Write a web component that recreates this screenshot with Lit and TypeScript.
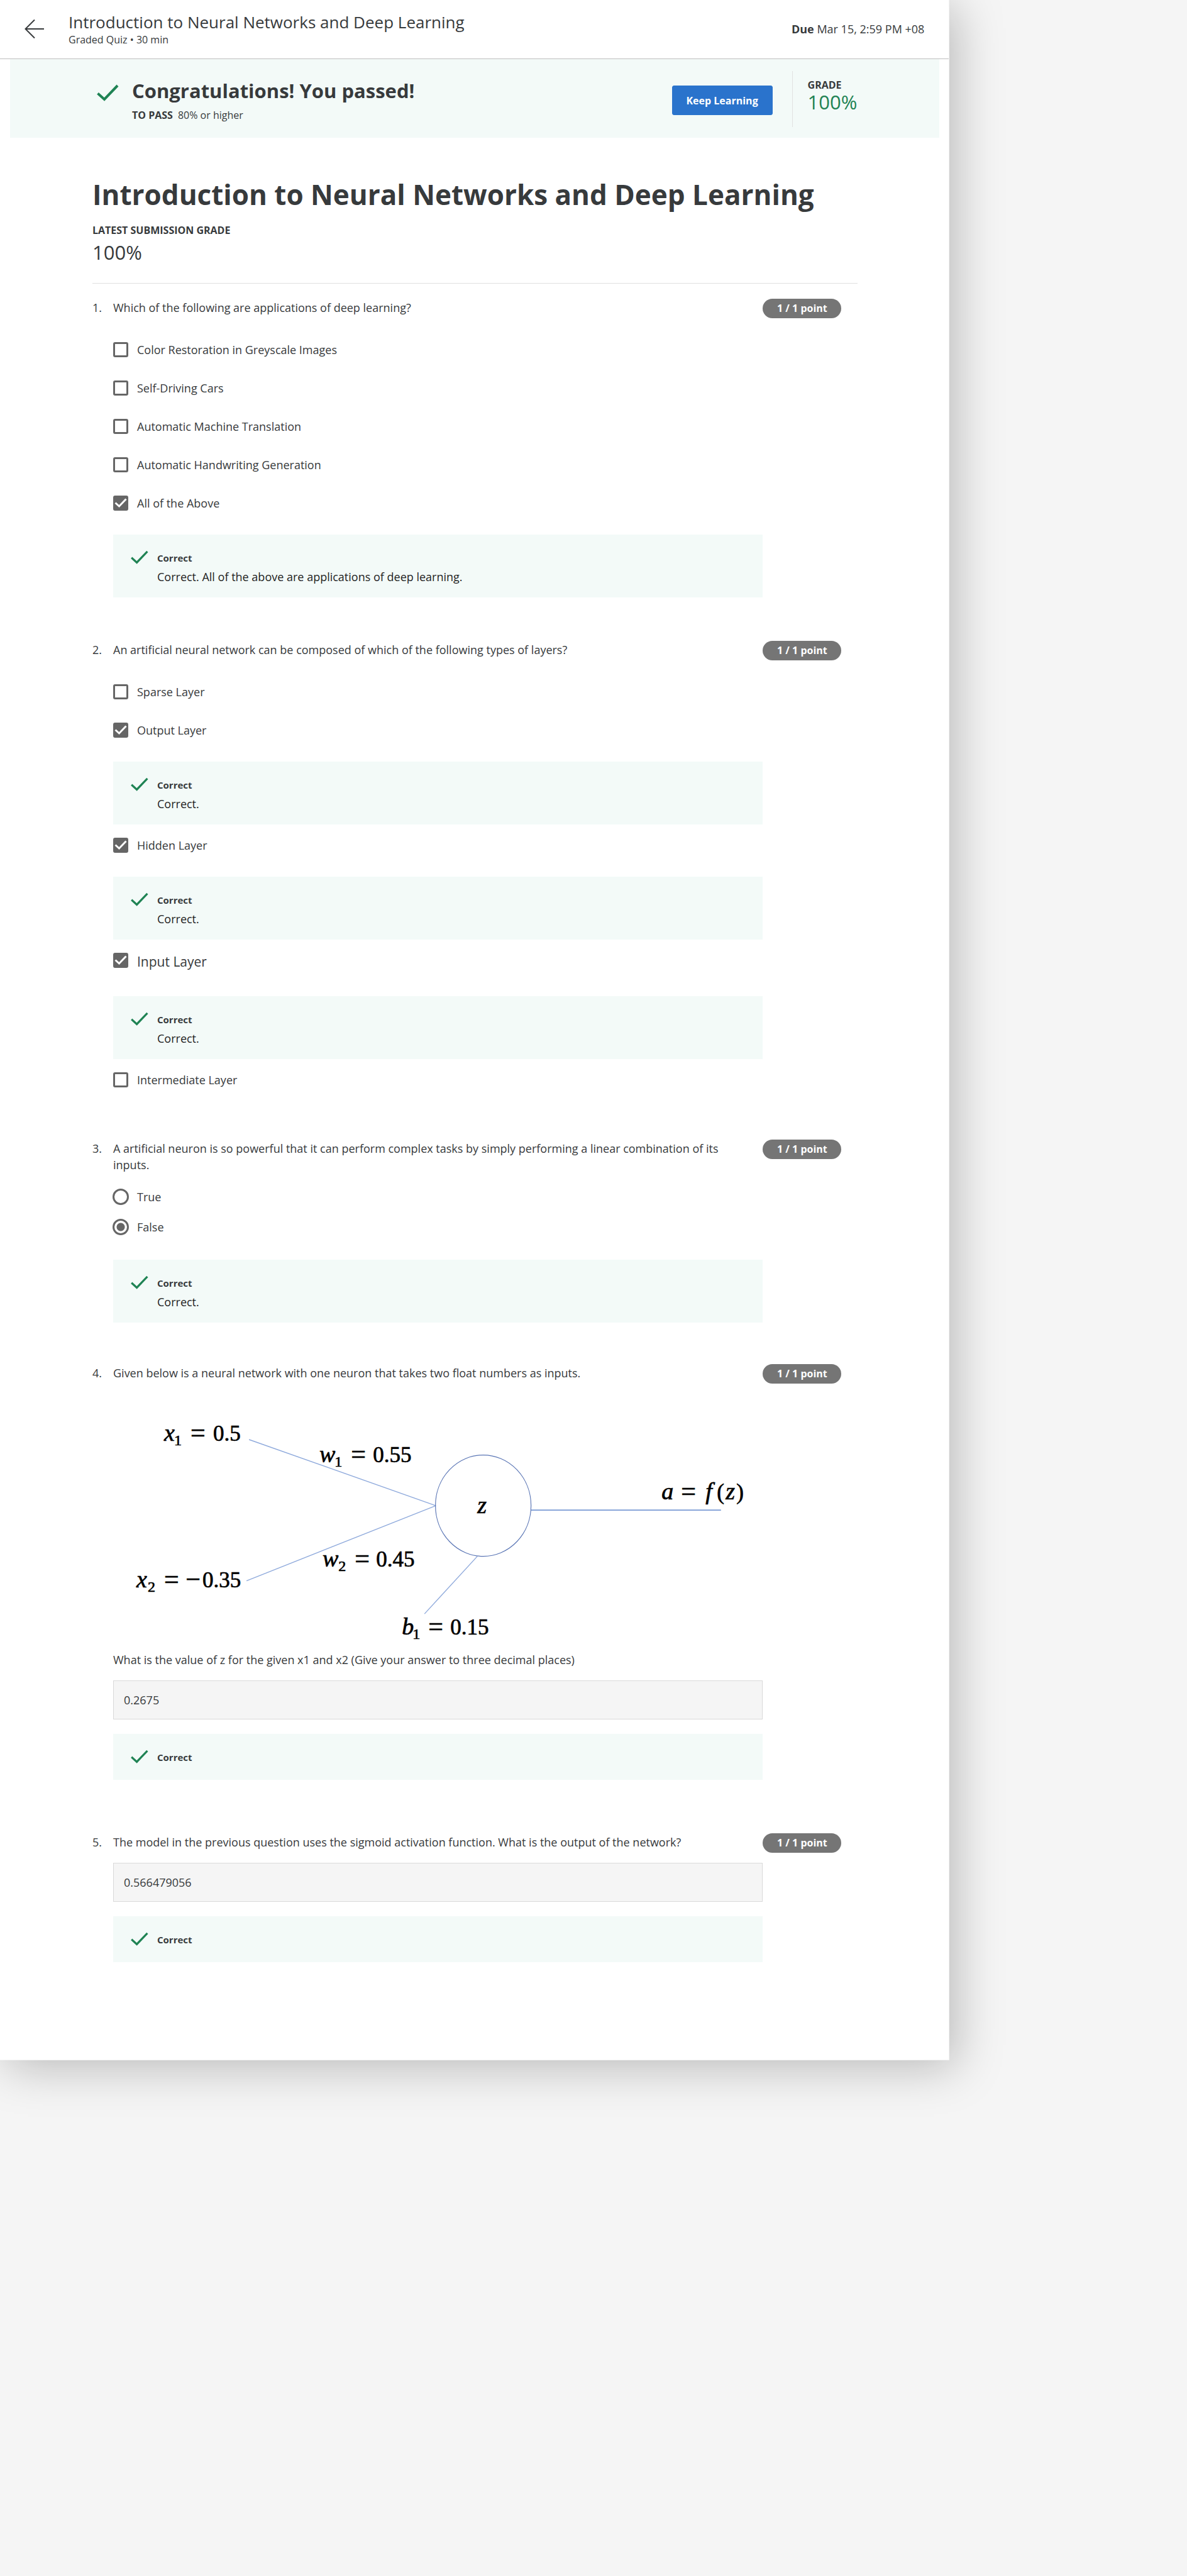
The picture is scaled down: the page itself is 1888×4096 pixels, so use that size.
import { LitElement, html, css, svg, nothing } from "lit";
import { customElement, property } from "lit/decorators.js";
import { classMap } from "lit/directives/class-map.js";

interface Option {
  label: string;
  checked?: boolean;
  large?: boolean;
  feedback?: string;
}

interface Question {
  prompt: string;
  kind: "checkbox" | "radio" | "numeric";
  options?: Option[];
  diagram?: boolean;
  followUp?: string;
  answer?: string;
}

const QUESTIONS: Question[] = [
  {
    prompt: "Which of the following are applications of deep learning?",
    kind: "checkbox",
    options: [
      { label: "Color Restoration in Greyscale Images" },
      { label: "Self-Driving Cars" },
      { label: "Automatic Machine Translation" },
      { label: "Automatic Handwriting Generation" },
      {
        label: "All of the Above",
        checked: true,
        feedback: "Correct. All of the above are applications of deep learning.",
      },
    ],
  },
  {
    prompt: "An artificial neural network can be composed of which of the following types of layers?",
    kind: "checkbox",
    options: [
      { label: "Sparse Layer" },
      { label: "Output Layer", checked: true, feedback: "Correct." },
      { label: "Hidden Layer", checked: true, feedback: "Correct." },
      { label: "Input Layer", checked: true, large: true, feedback: "Correct." },
      { label: "Intermediate Layer" },
    ],
  },
  {
    prompt:
      "A artificial neuron is so powerful that it can perform complex tasks by simply performing a linear combination of its inputs.",
    kind: "radio",
    options: [{ label: "True" }, { label: "False", checked: true, feedback: "Correct." }],
  },
  {
    prompt: "Given below is a neural network with one neuron that takes two float numbers as inputs.",
    kind: "numeric",
    diagram: true,
    followUp: "What is the value of z for the given x1 and x2 (Give your answer to three decimal places)",
    answer: "0.2675",
  },
  {
    prompt: "The model in the previous question uses the sigmoid activation function. What is the output of the network?",
    kind: "numeric",
    answer: "0.566479056",
  },
];

const checkMark = svg`<path d="M1.5 14.5 L12 24 L33 2" fill="none" stroke="currentColor" stroke-width="4"></path>`;

@customElement("answer-feedback")
export class AnswerFeedback extends LitElement {
  @property() message = "";

  static styles = css`
    :host {
      display: block;
    }
    .box {
      display: grid;
      grid-template-columns: 28px 1fr;
      column-gap: 14px;
      padding: 25px 28px 24px;
      background: #f3faf8;
    }
    .check {
      width: 28px;
      height: 22px;
      color: #1f8354;
    }
    .title {
      margin: 0;
      font-size: 15px;
      line-height: 24px;
      font-weight: 700;
      color: #373a3c;
    }
    .message {
      grid-column: 2;
      margin: 0;
      padding-top: 6px;
      font-size: 18px;
      line-height: 24px;
      color: #1f1f1f;
      margin-bottom: -3px;
    }
  `;

  render() {
    return html`<div class="box">
      <svg class="check" viewBox="0 0 35 27" aria-hidden="true">${checkMark}</svg>
      <p class="title">Correct</p>
      ${this.message ? html`<p class="message">${this.message}</p>` : nothing}
    </div>`;
  }
}

@customElement("neuron-diagram")
export class NeuronDiagram extends LitElement {
  static styles = css`
    :host {
      display: block;
    }
    .canvas {
      display: block;
      width: 100%;
      height: auto;
    }
    .edge {
      stroke: #8faadc;
      stroke-width: 1.4;
    }
    .output {
      stroke: #4472c4;
      stroke-width: 1.2;
    }
    .neuron {
      fill: none;
      stroke: #5b76b5;
      stroke-width: 1.2;
    }
    text {
      font-family: "Liberation Serif", serif;
      font-size: 35px;
      fill: #000;
      stroke: #000;
      stroke-width: 0.7;
    }
    .var {
      font-style: italic;
      font-size: 38px;
    }
    .sub {
      font-size: 24px;
    }
    .op {
      font-size: 42px;
    }
  `;

  /* One "name subscript = value" label; each part starts at its own x. */
  private term(y: number, name: string, nameX: number, sub: string, subX: number, eqX: number, value: string, valueX: number, sign = "=") {
    return svg`<text>
      <tspan class="var" x=${nameX} y=${y}>${name}</tspan><tspan class="sub" x=${subX} y=${y + 7}>${sub}</tspan><tspan class="op" x=${eqX} y=${y + 1}>${sign}</tspan><tspan x=${valueX} y=${y}>${value}</tspan>
    </text>`;
  }

  render() {
    return html`<svg class="canvas" viewBox="0 0 1033 430" role="img" aria-label="Single neuron with two inputs, two weights and a bias">
      <line class="edge" x1="216" y1="93" x2="513" y2="198"></line>
      <line class="edge" x1="212" y1="317.5" x2="513" y2="198"></line>
      <line class="edge" x1="579" y1="278.5" x2="495" y2="370"></line>
      <line class="output" x1="664.5" y1="205" x2="966.4" y2="205"></line>
      <ellipse class="neuron" cx="588.4" cy="198" rx="76" ry="80.5"></ellipse>
      ${this.term(95, "x", 81, "1", 97, 123, "0.5", 159)}
      ${this.term(129, "w", 328, "1", 352, 378, "0.55", 413)}
      ${this.term(295, "w", 333, "2", 358, 384, "0.45", 418)}
      ${this.term(328, "x", 37, "2", 55, 81, "0.35", 142, "= −")}
      ${this.term(403, "b", 459, "1", 476, 501, "0.15", 536)}
      <text class="var" x="579" y="210">z</text>
      <text>
        <tspan class="var" x="872" y="188">a</tspan><tspan class="op" x="903" y="189">=</tspan><tspan class="var" x="942" y="188">f</tspan><tspan x="960" y="188">(</tspan><tspan class="var" x="974" y="188">z</tspan><tspan x="991" y="188">)</tspan>
      </text>
    </svg>`;
  }
}

@customElement("quiz-question")
export class QuizQuestion extends LitElement {
  @property({ type: Number }) number = 1;
  @property({ attribute: false }) question!: Question;

  static styles = css`
    :host {
      display: block;
    }
    .question {
      display: flex;
      align-items: flex-start;
      padding: 0 26px 64px 0;
      color: #373a3c;
      font-size: 18px;
      line-height: 26px;
    }
    .question.radio {
      padding-bottom: 61px;
    }
    .question.numeric {
      padding-bottom: 80px;
    }
    .number {
      width: 33px;
      flex: none;
      padding-top: 1px;
    }
    .body {
      flex: 1;
      min-width: 0;
    }
    .prompt {
      margin: 0;
      padding: 1px 24px 0 0;
    }
    .follow-up {
      display: block;
    }
    .badge {
      flex: none;
      width: 125px;
      border-radius: 16px;
      background: #757575;
      color: #fff;
      font-size: 16px;
      line-height: 31px;
      font-weight: 700;
      text-align: center;
    }
    .options {
      margin: 0;
      padding: 24px 0 0;
      border: 0;
    }
    .radio .options {
      padding-top: 14px;
    }
    .option {
      display: flex;
      align-items: flex-start;
      gap: 14px;
      padding: 18px 0;
      line-height: 25px;
    }
    .option.large {
      padding-bottom: 22px;
      font-size: 21px;
      line-height: 28px;
    }
    .radio .option {
      align-items: center;
      gap: 13px;
      padding: 11px 0;
      margin-left: -1px;
    }
    .mark {
      position: relative;
      display: flex;
      flex: none;
    }
    .control {
      appearance: none;
      box-sizing: border-box;
      width: 24px;
      height: 24px;
      margin: 0;
      border: 3px solid #666;
      border-radius: 3px;
      background: #fff;
    }
    .control[type="checkbox"]:checked {
      background: #666;
    }
    .control[type="radio"] {
      width: 26px;
      height: 26px;
      border-radius: 50%;
    }
    .control[type="radio"]:checked {
      background: radial-gradient(circle, #666 6px, #fff 7px);
    }
    .tick {
      position: absolute;
      inset: 0;
      width: 24px;
      height: 24px;
      pointer-events: none;
    }
    .feedback {
      margin: 19px 0 3px;
    }
    .feedback:last-child {
      margin-bottom: 5px;
    }
    .radio .feedback {
      margin-top: 28px;
    }
    .field {
      display: block;
      box-sizing: border-box;
      width: 100%;
      height: 62px;
      margin: 20px 0 23px;
      padding: 0 16px;
      border: 1px solid #d9d9d9;
      border-radius: 0;
      background: #f5f5f5;
      color: #373a3c;
      font: inherit;
    }
    .numeric .feedback {
      margin-top: 0;
    }
  `;

  private renderOption(option: Option) {
    const type = this.question.kind;
    return html`
      <label class=${classMap({ option: true, large: !!option.large })}>
        <span class="mark">
          <input class="control" type=${type} name="q${this.number}" ?checked=${!!option.checked} />
          ${type === "checkbox" && option.checked
            ? html`<svg class="tick" viewBox="0 0 24 24" aria-hidden="true">
                <path d="M3.5 11.5 L9.5 17 L20.5 5.5" fill="none" stroke="#fff" stroke-width="3"></path>
              </svg>`
            : nothing}
        </span>
        <span>${option.label}</span>
      </label>
      ${option.feedback
        ? html`<answer-feedback class="feedback" .message=${option.feedback}></answer-feedback>`
        : nothing}
    `;
  }

  render() {
    const q = this.question;
    const numeric = q.kind === "numeric";
    return html`<section class="question ${q.kind}">
      <span class="number">${this.number}.</span>
      <div class="body">
        ${numeric && !q.followUp
          ? html`<label class="prompt follow-up" for="answer">${q.prompt}</label>`
          : html`<p class="prompt" id="prompt">${q.prompt}</p>`}
        ${q.diagram ? html`<neuron-diagram></neuron-diagram>` : nothing}
        ${q.followUp ? html`<label class="follow-up" for="answer">${q.followUp}</label>` : nothing}
        ${numeric
          ? html`<input class="field" id="answer" type="text" .value=${q.answer ?? ""} />
              <answer-feedback class="feedback"></answer-feedback>`
          : html`<fieldset class="options" aria-labelledby="prompt">
              ${q.options?.map((o) => this.renderOption(o))}
            </fieldset>`}
      </div>
      <span class="badge">1 / 1 point</span>
    </section>`;
  }
}

@customElement("app-root")
export class AppRoot extends LitElement {
  static styles = css`
    :host {
      display: block;
      min-height: 100vh;
      overflow: hidden;
      background: #f5f5f5;
      color: #373a3c;
      font-family: "Open Sans", sans-serif;
    }
    .page {
      box-sizing: border-box;
      width: 80%;
      background: #fff;
      border: solid #f3f3f3;
      border-width: 0 1px 1px 0;
      box-shadow: 10px 10px 70px rgba(0, 0, 0, 0.25);
    }
    .top {
      display: flex;
      align-items: center;
      padding: 18px 39px 19px 38px;
      border-bottom: 1px solid #bdbdbd;
    }
    .back {
      display: flex;
      width: 34px;
      margin-right: 37px;
      padding: 0;
      border: 0;
      background: none;
      color: #373a3c;
    }
    .heading {
      flex: 1;
    }
    .course {
      margin: 0;
      font-size: 26px;
      line-height: 34px;
      font-weight: 400;
    }
    .kind {
      margin: 0;
      font-size: 16px;
      line-height: 22px;
    }
    .due {
      margin: 0;
      font-size: 18px;
      line-height: 26px;
    }
    .banner {
      display: flex;
      align-items: flex-start;
      margin: 0 15px 0 16px;
      padding: 19px 131px 17px;
      background: #f3faf8;
    }
    .passed {
      flex: none;
      width: 35px;
      height: 27px;
      margin: 21px 21px 0 7px;
      color: #1f8354;
    }
    .result {
      flex: 1;
      padding-top: 10px;
    }
    .congrats {
      margin: 0 0 7px;
      font-size: 31px;
      line-height: 42px;
      font-weight: 700;
    }
    .caption {
      margin: 0;
      font-size: 16px;
      line-height: 22px;
    }
    .strong {
      font-weight: 700;
    }
    .caption .strong {
      margin-right: 8px;
    }
    .continue {
      width: 160px;
      height: 47px;
      margin: 23px 31px 0 0;
      border: 1px solid #2a73cc;
      border-radius: 3px;
      background: #2a73cc;
      color: #fff;
      font: 700 16px/22px "Open Sans", sans-serif;
    }
    .grade {
      padding: 11px 0 24px 24px;
      border-left: 1px solid #e1e1e1;
    }
    .score {
      margin: 0;
      font-size: 31px;
      line-height: 32px;
    }
    .score.green {
      color: #1f8354;
    }
    .content {
      padding: 60px 145px 70px 147px;
    }
    .title {
      margin: 0 0 16px;
      font-size: 44px;
      line-height: 60px;
      font-weight: 700;
    }
    .latest {
      display: grid;
      gap: 8px;
      margin-bottom: 24px;
      padding-bottom: 33px;
      border-bottom: 1px solid #e1e1e1;
    }
  `;

  render() {
    return html`<main class="page">
      <header class="top">
        <button class="back" type="button" aria-label="Back">
          <svg width="34" height="34" viewBox="0 0 34 34" fill="none" stroke="currentColor" stroke-width="2" aria-hidden="true">
            <path d="M32 17 H3 M17 2.5 L2.5 17 L17 31.5"></path>
          </svg>
        </button>
        <div class="heading">
          <p class="course">Introduction to Neural Networks and Deep Learning</p>
          <p class="kind">Graded Quiz • 30 min</p>
        </div>
        <p class="due"><span class="strong">Due</span> Mar 15, 2:59 PM +08</p>
      </header>
      <section class="banner">
        <svg class="passed" viewBox="0 0 35 27" aria-hidden="true">${checkMark}</svg>
        <div class="result">
          <h2 class="congrats">Congratulations! You passed!</h2>
          <p class="caption"><span class="strong">TO PASS</span>80% or higher</p>
        </div>
        <button class="continue" type="button">Keep Learning</button>
        <div class="grade">
          <p class="caption strong">GRADE</p>
          <p class="score green">100%</p>
        </div>
      </section>
      <div class="content">
        <h1 class="title">Introduction to Neural Networks and Deep Learning</h1>
        <div class="latest">
          <p class="caption strong">LATEST SUBMISSION GRADE</p>
          <p class="score">100%</p>
        </div>
        ${QUESTIONS.map((q, i) => html`<quiz-question .number=${i + 1} .question=${q}></quiz-question>`)}
      </div>
    </main>`;
  }
}
